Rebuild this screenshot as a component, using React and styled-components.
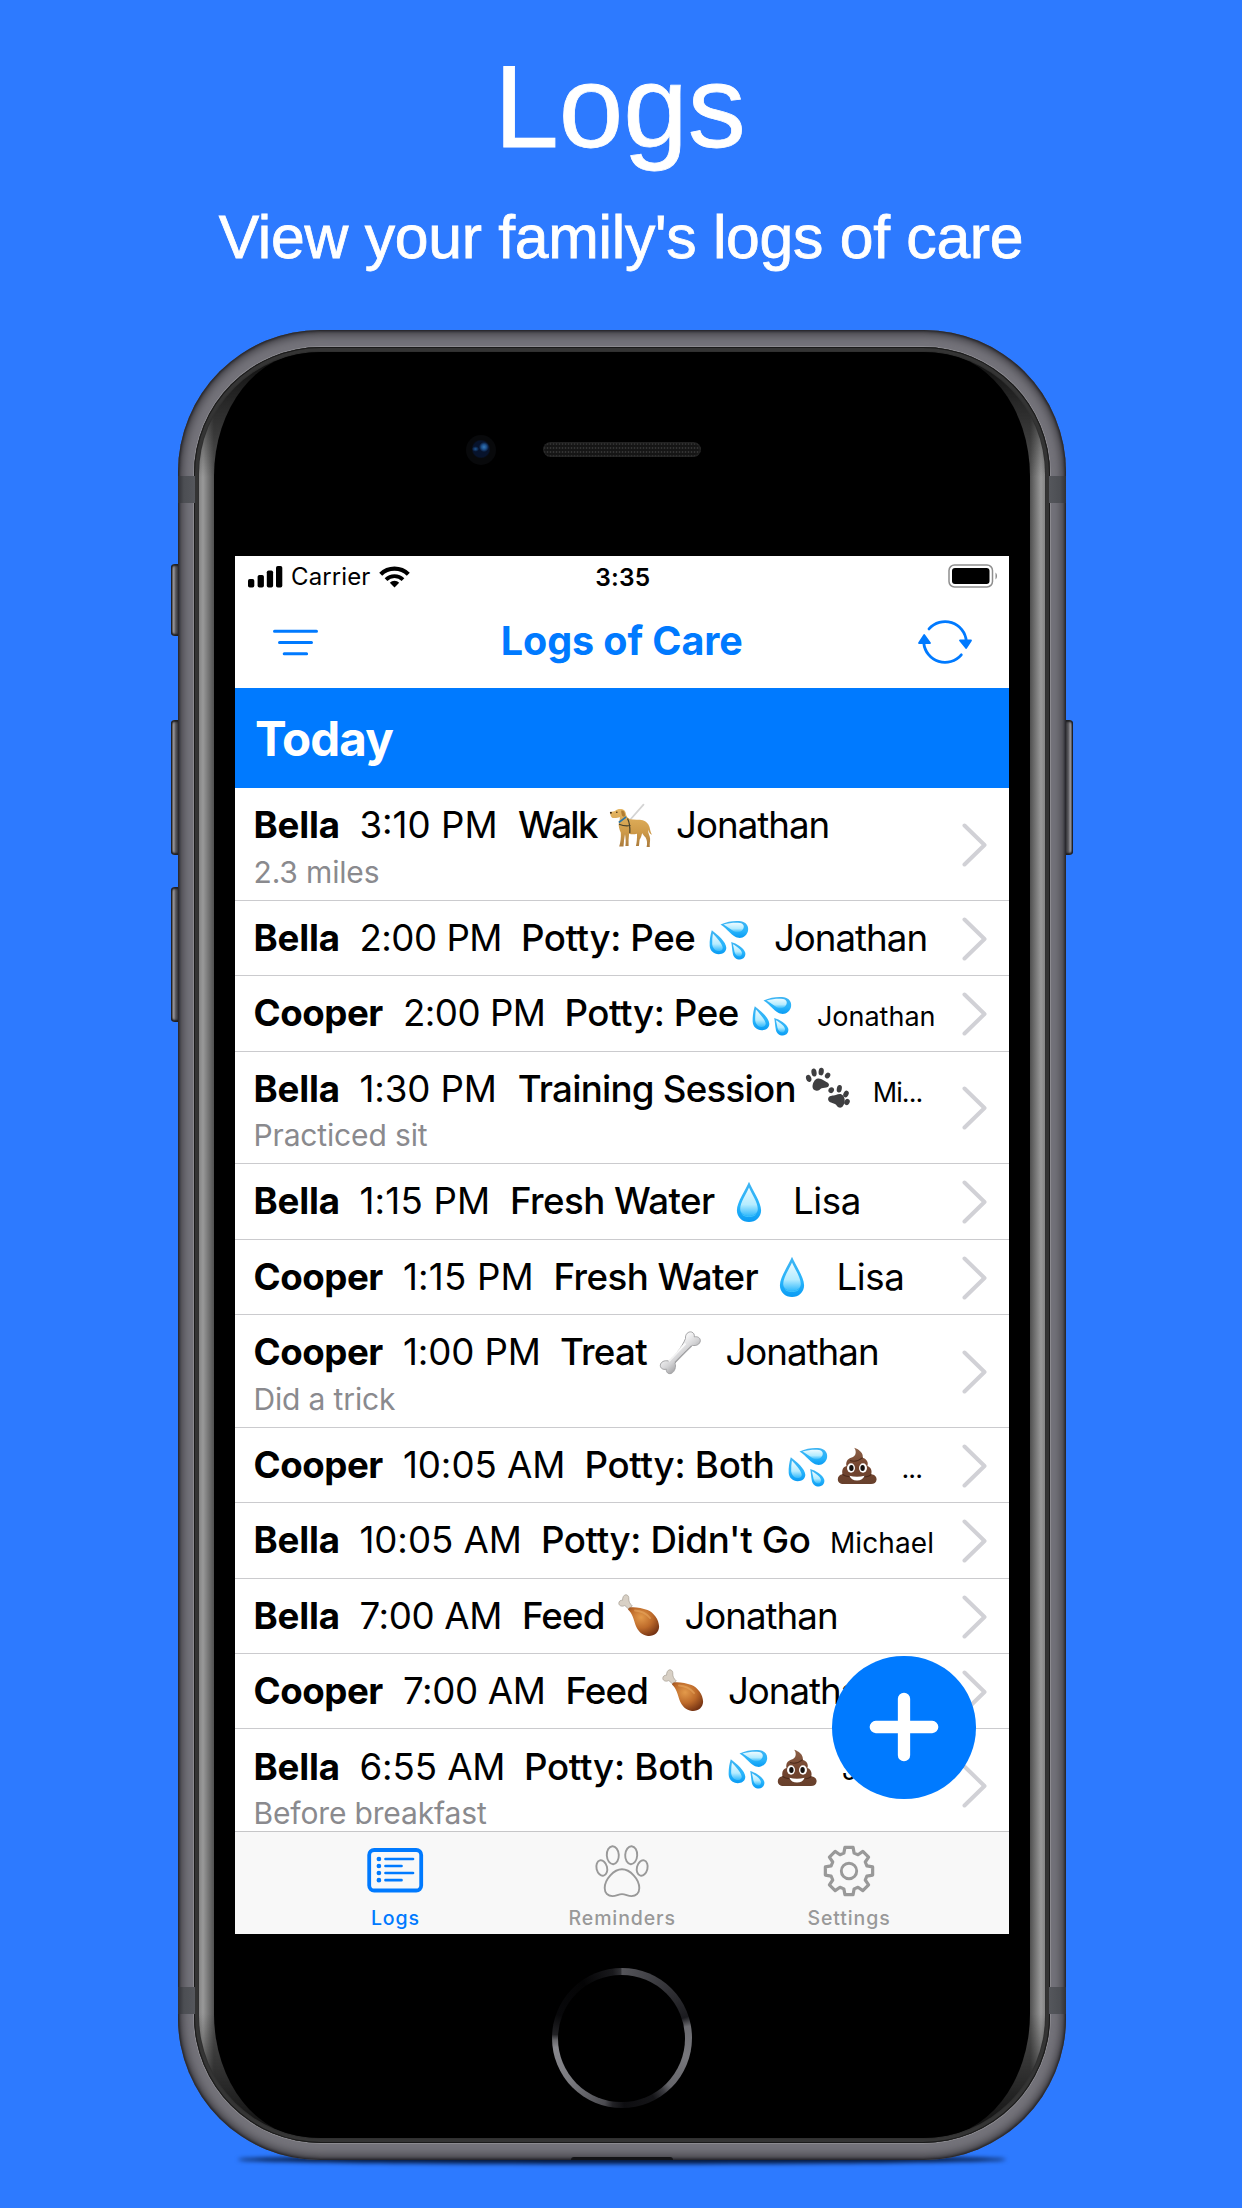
import React from 'react';
import styled, { createGlobalStyle } from 'styled-components';

const BLUE = '#007aff';

const GlobalStyle = createGlobalStyle`
  * { box-sizing: border-box; }
  body { margin: 0; background: #2d7aff; }
`;

/* ---------- page ---------- */

const Page = styled.main`
  width: 1242px;
  height: 2208px;
  overflow: hidden;
  background: #2d7aff;
  display: flex;
  flex-direction: column;
  font-family: Inter, "Liberation Sans", sans-serif;
`;

const Header = styled.header`
  height: 330px;
  flex: none;
  padding-top: 41px;
  color: #fff;
  text-align: center;
  font-family: "Liberation Sans", Arial, sans-serif;
`;

const Title = styled.h1`
  margin: 0;
  padding-right: 2px;
  font-size: 116px;
  line-height: 132px;
  font-weight: 400;
  -webkit-text-stroke: 0.8px #fff;
`;

const Subtitle = styled.p`
  margin: 30px 0 0;
  font-size: 60.7px;
  line-height: 68px;
  letter-spacing: -0.28px;
  -webkit-text-stroke: 0.8px #fff;
`;

/* ---------- phone hardware ---------- */

const Phone = styled.div`
  position: relative;
  isolation: isolate;
  flex: none;
  width: 888.5px;
  height: 1829.5px;
  margin-left: 177.5px;
`;

const SideButton = styled.i`
  position: absolute;
  z-index: -1;
  top: ${(p) => p.$top}px;
  ${(p) => p.$side}: -6.5px;
  width: 12px;
  height: ${(p) => p.$length}px;
  border-radius: 4px;
  background: linear-gradient(${(p) => (p.$side === 'left' ? 'to right' : 'to left')}, #232327 0 8%, #8f8e93 16% 26%, #66656a 34%, #2c2c30 62%);
  box-shadow: inset 0 3px 2px -1px #1d1d20, inset 0 -3px 2px -1px #1d1d20;
`;

const GroundShadow = styled.i`
  position: absolute;
  z-index: -2;
  left: 60px;
  right: 60px;
  bottom: -4px;
  height: 9px;
  border-radius: 50%;
  background: #061a40;
  filter: blur(2px);
`;

const Frame = styled.div`
  position: relative;
  height: 100%;
  padding: 16.5px;
  border-radius: 142px;
  background: #74737a;
  box-shadow: inset 0 0 3px 1px #1c1c20, inset 0 0 10px 4px #3b3a40;
`;

const Antenna = styled.i`
  position: absolute;
  top: ${(p) => p.$top}px;
  ${(p) => p.$side}: 0;
  width: 17px;
  height: 27px;
  background: linear-gradient(${(p) => (p.$side === 'left' ? 'to right' : 'to left')}, #303136, #4c4e53 35%, #55575c);
`;

const PortNotch = styled.i`
  position: absolute;
  left: 50%;
  bottom: 0;
  width: 102px;
  height: 3px;
  margin-left: -51px;
  border-radius: 6px 6px 0 0;
  background: #131316;
`;

const Ring = styled.div`
  height: 100%;
  padding: 5px;
  border-radius: 127px;
  background: #303030;
  box-shadow: 0 0 0 1px #8b8a90, inset 0 0 0 1px #1a1a1a, inset 0 0 0 4px #343434;
`;

const Glass = styled.div`
  position: relative;
  height: 100%;
  padding: 0 15px;
  border-radius: 122px;
  overflow: hidden;
  background:
    linear-gradient(#141414 15px, transparent 125px, transparent calc(100% - 125px), #141414 calc(100% - 15px)),
    linear-gradient(to right, #858585, #999 4px, #505050 15px, #505050 calc(100% - 15px), #999 calc(100% - 4px), #858585);
`;

const Face = styled.div`
  height: 100%;
  border-radius: 98px / 124px;
  background: #000;
  display: flex;
  flex-direction: column;
  align-items: center;
`;

const TopBezel = styled.div`
  width: 100%;
  height: 204px;
  flex: none;
  padding-bottom: 8px;
  display: grid;
  grid-template-columns: 1fr 158px 1fr;
  align-items: center;
  column-gap: 47px;
`;

const Camera = styled.i`
  justify-self: end;
  width: 30px;
  height: 30px;
  border-radius: 50%;
  background:
    radial-gradient(ellipse at 18px 12px, #3378b8 0, #1d4f8c 2.5px, transparent 5px),
    radial-gradient(ellipse at 9.5px 14px, #1f5795 0, transparent 3.5px),
    radial-gradient(circle at 15px 14px, #07132c 8px, #08090b 9.5px);
`;

const Speaker = styled.i`
  height: 15px;
  border-radius: 8px;
  background:
    radial-gradient(circle, #333 0.8px, transparent 1.2px) 0 0 / 3px 4px,
    #151515;
  box-shadow: inset 0 0 2px 1px #262626;
`;

const BottomBezel = styled.div`
  flex: 1;
  display: flex;
  align-items: center;
  padding-top: 5px;
`;

const HomeButton = styled.i`
  width: 140px;
  height: 140px;
  border-radius: 50%;
  padding: 6.5px;
  background: conic-gradient(#55555a 0deg, #45454a 20deg, #29292d 55deg, #1b1b1f 72deg, #6a6a6f 80deg, #77777c 105deg, #66666b 135deg, #3a3a3f 142deg, #151518 152deg, #0d0d10 178deg, #222226 188deg, #4b4b50 195deg, #7b7b80 230deg, #88888d 262deg, #6a6a6e 268deg, #222225 273deg, #08080a 290deg, #040405 325deg, #19191c 352deg, #303034 359deg, #55555a 360deg);
  &::after {
    content: "";
    display: block;
    height: 100%;
    border-radius: 50%;
    background: #000;
  }
`;

/* ---------- app screen ---------- */

const Screen = styled.div`
  position: relative;
  flex: none;
  width: 774.5px;
  height: 1378px;
  background: #fff;
  color: #000;
  display: flex;
  flex-direction: column;
  overflow: hidden;
`;

const StatusBar = styled.div`
  height: 41px;
  flex: none;
  padding: 1px 11px 0 13px;
  display: grid;
  grid-template-columns: 1fr auto 1fr;
  align-items: center;
  font-size: 24px;
  line-height: 30px;
`;

const Network = styled.div`
  display: flex;
  align-items: center;
  gap: 8.5px;
  letter-spacing: 0.1px;
`;

const Clock = styled.time`
  font-size: 24.5px;
  font-weight: 600;
  letter-spacing: 0.2px;
`;

const Battery = styled.svg`
  justify-self: end;
  margin-bottom: 2px;
`;

const NavBar = styled.div`
  height: 91.5px;
  flex: none;
  padding: 0 37px 0 37px;
  display: grid;
  grid-template-columns: 1fr auto 1fr;
  align-items: center;
  color: ${BLUE};
`;

const NavTitle = styled.h2`
  margin: 0;
  padding-bottom: 2px;
  font-size: 39.5px;
  line-height: 48px;
  font-weight: 700;
  letter-spacing: -0.1px;
`;

const NavIcon = styled.svg`
  justify-self: ${(p) => p.$side};
  overflow: visible;
`;

const DayHeader = styled.div`
  height: 100px;
  flex: none;
  padding: 0 20.5px 0;
  background: ${BLUE};
  color: #fff;
  font-size: 47.5px;
  font-weight: 700;
  line-height: 101px;
  letter-spacing: -0.9px;
`;

const List = styled.div`
  flex: 1;
  min-height: 0;
  overflow: hidden;
`;

const Row = styled.div`
  height: ${(p) => (p.$tall ? 112.7 : 75.42)}px;
  padding: 15.2px 22px 0 19px;
  border-bottom: 1px solid #cbcbce;
  display: flex;
  justify-content: space-between;
`;

const Entry = styled.div`
  display: flex;
  flex-direction: column;
`;

const Line = styled.div`
  height: 44px;
  display: flex;
  align-items: baseline;
  font-size: 36.7px;
  line-height: 44px;
  white-space: pre;
`;

const Cell = styled.span`
  flex: none;
  width: ${(p) => p.$w}px;
  font-weight: ${(p) => p.$weight || 400};
  letter-spacing: ${(p) => p.$track || 0}px;
`;

const Person = styled.span`
  margin-left: ${(p) => p.$gap}px;
  font-size: ${(p) => p.$size || 36.7}px;
  letter-spacing: ${(p) => p.$track || 0}px;
`;

const Note = styled.div`
  margin-top: 6.8px;
  font-size: 30px;
  line-height: 36px;
  letter-spacing: -0.15px;
  color: #8a8a8e;
`;

const ChevronIcon = styled.svg`
  align-self: center;
  margin-top: -13px;
  flex: none;
`;

const Glyph = styled.svg`
  flex: none;
  align-self: flex-start;
  width: 42px;
  height: 42px;
  margin: 3.4px 3.5px 0;
  overflow: visible;
`;

const AddButton = styled.button`
  position: absolute;
  left: 597.5px;
  top: 1100px;
  width: 143.5px;
  height: 143.5px;
  padding: 0;
  border: 0;
  border-radius: 50%;
  background: ${BLUE};
  display: grid;
  place-items: center;
`;

const TabBar = styled.nav`
  height: 102.5px;
  flex: none;
  border-top: 1.5px solid #c6c6c8;
  background: #f8f8f8;
  display: flex;
  justify-content: center;
`;

const Tab = styled.div`
  width: 226.8px;
  padding: 9px 0 0 1px;
  display: flex;
  flex-direction: column;
  align-items: center;
  color: ${(p) => (p.$active ? BLUE : '#999')};
  font-size: 19.5px;
  line-height: 24px;
  font-weight: 500;
  letter-spacing: 0.9px;
`;

const TabIcon = styled.svg`
  width: 60px;
  height: 58px;
  margin-bottom: 7px;
`;

/* ---------- drawings ---------- */

const HiddenDefs = styled.svg`
  display: block;
  width: 0;
  height: 0;
  flex: none;
`;

const Defs = () => (
  <HiddenDefs aria-hidden="true">
    <defs>
      <linearGradient id="drop" x1="0" y1="0" x2="0" y2="1">
        <stop offset="0" stopColor="#3fb4f2" />
        <stop offset="0.6" stopColor="#28b4fb" />
        <stop offset="1" stopColor="#0a9bf3" />
      </linearGradient>
      <linearGradient id="dropShine" x1="0" y1="0" x2="0" y2="1">
        <stop offset="0" stopColor="#eefbff" />
        <stop offset="0.6" stopColor="#b5ecff" />
        <stop offset="1" stopColor="#31b9fc" />
      </linearGradient>
      <linearGradient id="coat" x1="0" y1="0" x2="0" y2="1">
        <stop offset="0" stopColor="#e6b763" />
        <stop offset="0.6" stopColor="#cf9b49" />
        <stop offset="1" stopColor="#a97a3c" />
      </linearGradient>
      <linearGradient id="bone" x1="0.2" y1="0.2" x2="0.7" y2="0.8">
        <stop offset="0.3" stopColor="#f3f3f4" />
        <stop offset="0.6" stopColor="#d3d3d5" />
        <stop offset="1" stopColor="#8e8e90" />
      </linearGradient>
      <radialGradient id="meat" cx="0.42" cy="0.35" r="0.75">
        <stop offset="0" stopColor="#e39a4b" />
        <stop offset="0.5" stopColor="#bd6a2a" />
        <stop offset="1" stopColor="#6c2c10" />
      </radialGradient>
      <linearGradient id="swirl" x1="0" y1="0" x2="0" y2="1">
        <stop offset="0" stopColor="#8c6148" />
        <stop offset="0.5" stopColor="#754630" />
        <stop offset="1" stopColor="#67402c" />
      </linearGradient>
    </defs>
  </HiddenDefs>
);

const Splash = () => (
  <Glyph viewBox="0 0 42 42">
    <g fill="url(#drop)">
      <path d="M12.5 5.5C20 2 28 1.5 33 2.3c5 .9 7.700 4.500 7.100 8.900-.7 5-5.200 8.300-9.800 7.600C24.500 18 19.500 10 12.500 5.500Z" />
      <path d="M3.800 11.300c5.500 4.200 14.400 11.500 14.500 17.500.1 3.800-3.200 6.400-7.600 6.400-5 0-8.600-3.500-9-8.200-.3-5 .6-11.200 2.100-15.700Z" />
      <path d="M23.200 23c5.200 1.500 12.500 5.700 14 10.500.900 3.600-1.500 6.900-5.400 7-3.600 0-6.200-2.400-6.900-5.600-.900-4-.9-8.700-1.700-11.900Z" />
    </g>
    <g fill="url(#dropShine)">
      <path d="M15.500 5.600c6-1.900 12-2.200 16.500-1.700 3.500.5 4.700 3.300 3.100 6.100-1.900 3-5.400 4.300-9 2.500C22.500 10.700 19.500 7.700 15.500 5.600Z" />
      <path d="M4.900 14.500c3.300 3.600 8.600 9.300 9.700 13.500.6 2.800-1.700 4.400-4.500 4-3.600-.6-5.700-3.500-5.900-7-.1-3.500.1-7 .7-10.500Z" />
      <path d="M24.900 25.300c3.800 2 8 5 9 8.200.5 2.400-.9 3.900-2.700 3.900-2.600-.2-4.100-2-4.700-4.600-.6-2.600-.9-5-1.600-7.500Z" />
    </g>
  </Glyph>
);

const Droplet = () => (
  <Glyph viewBox="0 0 42 42">
    <path d="M21-1.200c3 7.700 12.100 20.200 12.100 28.500 0 7-5.500 11.800-12.100 11.800S8.900 34.300 8.900 27.300C8.900 19 18 6.500 21-1.200Z" fill="url(#drop)" />
    <path d="M21 4.500c2.700 6.500 8.800 15 8.800 21.500 0 4.300-4 7-8.800 7s-8.800-2.700-8.800-7C12.200 19.500 18.300 11 21 4.500Z" fill="url(#dropShine)" />
    <path d="M13.500 30c2 4.200 13 4.200 15 0-.5 5.400-14.500 5.400-15 0Z" fill="#56d4ff" opacity=".7" />
  </Glyph>
);

const GuideDog = () => (
  <Glyph viewBox="0 0 42 42">
    <path d="M33.500-2.300 19.500 13.500" stroke="#d4d4d4" strokeWidth="1.800" fill="none" strokeLinecap="round" />
    <path
      d="M.3 5.300C2 4.300 4 4.700 5.200 3.800 7 2 10 1.500 12.500 2.300c2.200.7 3.200 2.600 3.500 5 .4 2.300 1.800 4 4.300 5 4.200.8 8.700 0 12.500 1 3.400.9 5.500 3.300 6.700 6.700.8 2.900 1.100 5.700 2.500 7.700-2.200-.7-3.200-2.600-3.900-5.200-.4 3.400 1.800 6 2 9 .1 3-.6 5.600-.3 8.500h-3.200c.9-3.700.6-6.700-1-9.500-1.700-1.700-3-3.200-3.500-4.500-.5 2.700-1.300 4.900-2.400 6.500-.5 2.500-.4 4.700-.8 6.500h-3c.9-3.300 1.200-7.500 1.100-12.300-2.800.7-5.400.7-7.900 0-.5 4.100-.7 8.100-.5 12.300h-3.200c.6-4 .2-8-.4-11.700-.7 4-1.300 8-1.500 12.200H9.200c1.400-4.500 1.900-9.200 1.600-13.800-1.500-3.200-2.400-6.500-2-9.400.5-2.400 1.200-4.400 1-6.300-1.800.8-4.700 1.400-7.300.9C.8 10.400 0 7.300.3 5.300Z"
      fill="url(#coat)"
    />
    <path d="M11.300 3.500c2.400-.4 4 1.600 3.700 5.500-.8 1.300-2.600.8-3.200-1-.3-1.600-.8-3.200-.5-4.500Z" fill="#b17d31" />
    <circle cx="6.800" cy="5.200" r=".8" fill="#3d2810" />
    <circle cx=".9" cy="5.800" r="1" fill="#3d2810" />
    <path d="m8.800 15.500 7.400-5.700" stroke="#2b76a9" strokeWidth="1.600" />
    <path d="M9 17.300c4 1.500 7.500 2 11.500 1.200M17.500 11.500c1.800 3.500 2.700 7.500 2.300 14.500" stroke="#46402c" strokeWidth="1.200" fill="none" />
  </Glyph>
);

const Paws = () => (
  <Glyph viewBox="0 0 42 42">
    <g fill="#3f3f41">
      <path d="M5.500 16.500c.2-3.500 2-7.500 5.500-8 4-.4 6 2.500 8.500 3.400 2.700 1 3.300 3.500 1.300 5-2 1-4.300.5-6.200 1.300-1.800 1-2.700 2.800-5 2.600-2.400-.3-4.300-2-4.100-4.300Z" />
      <ellipse cx="1.700" cy="8.400" rx="2.600" ry="3.700" transform="rotate(-18 1.700 8.400)" />
      <ellipse cx="7" cy="2.500" rx="2.600" ry="4" transform="rotate(-8 7 2.500)" />
      <ellipse cx="14.200" cy="1.600" rx="2.600" ry="3.800" transform="rotate(8 14.200 1.600)" />
      <ellipse cx="20.600" cy="5.500" rx="2.500" ry="3.100" transform="rotate(35 20.600 5.500)" />
      <path d="M21.500 27.500c1.500-2.200 4.800-1.700 7.300-2.500 3-1 5.500-1.600 7.400.8 2 2.800 2.100 7-.2 10.300-1.500 2.200-4.500 2-6-.1-1.100-1.900-2.700-2.700-4.800-3.100-2.800-.6-5-2.700-3.700-5.400Z" />
      <ellipse cx="24.200" cy="20.200" rx="2.700" ry="3" transform="rotate(30 24.200 20.200)" />
      <ellipse cx="32.300" cy="18.800" rx="2.500" ry="3.800" transform="rotate(12 32.300 18.800)" />
      <ellipse cx="39" cy="24" rx="2.500" ry="3.500" transform="rotate(28 39 24)" />
      <ellipse cx="40" cy="32" rx="2.600" ry="3.200" transform="rotate(30 40 32)" />
    </g>
  </Glyph>
);

const Bone = () => (
  <Glyph viewBox="0 0 42 42">
    <path
      d="M26.500 4.500c-.5-4.500 3-7.300 6-6.500 2.200.7 3.200 2.600 2.800 4.900 3.300-.8 6.200 1 6 4-.4 3.300-4 5.300-7.800 4.500-2.500 1.300-15 14-17.500 17.700 1.300 3.600-.2 8.800-3.700 10.300-3 1-5.300-1-5-4.200-3.300.8-6.200-1-6-4 .4-3.300 4-5.100 8-4.300 3.300-2 14-13.500 17.200-22.400Z"
      fill="url(#bone)"
      stroke="#9c9c9e"
      strokeWidth=".9"
    />
    <path d="M26.500 9.500 9.800 27" stroke="#fff" strokeWidth="2" opacity=".8" />
    <path d="M32.500 12 16 28.500" stroke="#98989b" strokeWidth="1.500" opacity=".7" />
  </Glyph>
);

const Drumstick = () => (
  <Glyph viewBox="0 0 42 42">
    <path d="M10.500 12 6.800 8.500C4 10 .8 8.800.8 6.300c0-2 1.700-3.300 3.800-3.100-.2-2.700 1.200-5.500 3.400-5.500 2 .2 3 2 2.800 4.300-.1 2.700 1 4.500 3.500 7Z" fill="#d8d0c5" stroke="#a59c90" strokeWidth=".7" />
    <path d="M12 10.500c4.500-.8 12 .6 17.500 2.500 6 2.300 11.500 9.500 11.600 16.500C41 35.500 36 39.500 30 39c-6-.6-10.500-5.200-12.500-11-1.800-5.300-2.700-11-7.500-15.500.3-1 .9-1.700 2-2Z" fill="url(#meat)" />
    <path d="M17 13.500c5 .3 11 2.500 15 7.500" stroke="#eeb067" strokeWidth="2" fill="none" opacity=".5" strokeLinecap="round" />
  </Glyph>
);

const Poop = () => (
  <Glyph viewBox="0 0 42 42">
    <path d="M18.200 1.700c5 1.500 9.500 5.500 8.500 10 4 1.300 6 4.500 4.700 8.300 3.200 1 5 4.500 3.800 8.300 3.500.3 5.500 2.500 5.400 5.200-.2 3-2.500 4.500-5.600 4.500H7.500c-3.600 0-5.700-1.900-5.700-4.800 0-2.600 1.700-4.700 4.700-5-1-4 .7-7.500 4-8.200-1-4 1-7 4.500-8.200 3-1.200 4.700-3 4.700-5.400 0-1.700-.3-3.200-1.500-4.700Z" fill="url(#swirl)" />
    <path d="M14 14.500c4 1.500 9 .3 12.700-2.800M6.500 28.200c2 2 6 2.800 10 2.500M35.200 28.300c-1.800 2-4.500 2.600-8 2.500" stroke="#4d2b1b" strokeWidth="1.100" fill="none" />
    <ellipse cx="15" cy="22" rx="4" ry="4.700" fill="#fff" />
    <ellipse cx="27" cy="22" rx="4" ry="4.700" fill="#fff" />
    <ellipse cx="15.400" cy="22" rx="2.200" ry="2.900" fill="#16110f" />
    <ellipse cx="26.600" cy="22" rx="2.200" ry="2.900" fill="#16110f" />
    <path d="M13.500 29.800c4.500 1.200 10.500 1.200 15 0-1 3.200-3.800 4.700-7.500 4.700s-6.500-1.500-7.500-4.700Z" fill="#fff" />
  </Glyph>
);

const Chevron = () => (
  <ChevronIcon width="25" height="44" viewBox="0 0 25 44" fill="none" stroke="#d1d1d6" strokeWidth="4" strokeLinecap="round" strokeLinejoin="round">
    <path d="M2.500 2.500 22.500 22 2.500 41.500" />
  </ChevronIcon>
);

/* ---------- data ---------- */

const NAMES = {
  Bella: { w: 105.9, track: -0.2 },
  Cooper: { w: 149.4, track: -0.45 },
};

const TIMES = {
  '3:10 PM': { w: 158.7, track: 0 },
  '2:00 PM': { w: 161.5, track: -0.5 },
  '1:30 PM': { w: 158.3, track: -0.1 },
  '1:15 PM': { w: 150.5, track: 0.2 },
  '1:00 PM': { w: 157, track: -0.1 },
  '10:05 AM': { w: 181.5, track: -0.05 },
  '7:00 AM': { w: 162.5, track: -0.35 },
  '6:55 AM': { w: 164.5, track: -0.1 },
};

const ACTIONS = {
  walk: { label: 'Walk', w: 88.5, track: -1.7, icons: [GuideDog] },
  pee: { label: 'Potty: Pee', w: 183.5, track: -0.4, icons: [Splash] },
  training: { label: 'Training Session', w: 286, track: -0.75, icons: [Paws] },
  water: { label: 'Fresh Water', w: 214.5, track: -0.55, icons: [Droplet] },
  treat: { label: 'Treat', w: 96, track: -0.7, icons: [Bone] },
  both: { label: 'Potty: Both', w: 199.5, track: -0.25, icons: [Splash, Poop] },
  none: { label: "Potty: Didn't Go", w: 271.5, track: -0.38, icons: [] },
  feed: { label: 'Feed', w: 93, track: -0.85, icons: [Drumstick] },
};

const JONATHAN = { text: 'Jonathan', track: -1, gap: 20.5 };
const LISA = { text: 'Lisa', track: -0.4, gap: 19.5 };

const LOGS = [
  { name: 'Bella', time: '3:10 PM', action: 'walk', person: JONATHAN, note: '2.3 miles' },
  { name: 'Bella', time: '2:00 PM', action: 'pee', person: JONATHAN },
  { name: 'Cooper', time: '2:00 PM', action: 'pee', person: { text: 'Jonathan', size: 27, gap: 20 } },
  { name: 'Bella', time: '1:30 PM', action: 'training', person: { text: 'Mi...', size: 27, track: -0.9, gap: 20 }, note: 'Practiced sit' },
  { name: 'Bella', time: '1:15 PM', action: 'water', person: LISA },
  { name: 'Cooper', time: '1:15 PM', action: 'water', person: LISA },
  { name: 'Cooper', time: '1:00 PM', action: 'treat', person: JONATHAN, note: 'Did a trick' },
  { name: 'Cooper', time: '10:05 AM', action: 'both', person: { text: '...', size: 27, track: -0.9, gap: 19.5 } },
  { name: 'Bella', time: '10:05 AM', action: 'none', person: { text: 'Michael', size: 28, track: 0.1, gap: 17.5 } },
  { name: 'Bella', time: '7:00 AM', action: 'feed', person: JONATHAN },
  { name: 'Cooper', time: '7:00 AM', action: 'feed', person: JONATHAN },
  { name: 'Bella', time: '6:55 AM', action: 'both', person: { text: 'J...', size: 27, track: -0.9, gap: 20.5 }, note: 'Before breakfast' },
];

const LogRow = ({ log }) => {
  const name = NAMES[log.name];
  const time = TIMES[log.time];
  const action = ACTIONS[log.action];
  const { person } = log;
  return (
    <Row $tall={Boolean(log.note)}>
      <Entry>
        <Line>
          <Cell $w={name.w} $track={name.track} $weight={700}>{log.name}</Cell>
          <Cell $w={time.w} $track={time.track}>{log.time}</Cell>
          <Cell $w={action.w} $track={action.track} $weight={500}>{action.label}</Cell>
          {action.icons.map((Icon, i) => <Icon key={i} />)}
          <Person $gap={person.gap} $size={person.size} $track={person.track}>{person.text}</Person>
        </Line>
        {log.note && <Note>{log.note}</Note>}
      </Entry>
      <Chevron />
    </Row>
  );
};

const gearPath = (() => {
  const pts = [];
  const c = 30;
  for (let i = 0; i < 8; i += 1) {
    const a = (i * Math.PI) / 4;
    [[-0.28, 18.6], [-0.17, 24], [0.17, 24], [0.28, 18.6]].forEach(([d, r]) => {
      pts.push(`${(c + r * Math.sin(a + d)).toFixed(2)} ${(c - r * Math.cos(a + d)).toFixed(2)}`);
    });
  }
  return `M${pts.join('L')}Z`;
})();

export default function App() {
  return (
    <Page>
      <GlobalStyle />
      <Defs />
      <Header>
        <Title>Logs</Title>
        <Subtitle>View your family's logs of care</Subtitle>
      </Header>
      <Phone>
        <GroundShadow />
        <SideButton $side="left" $top={234} $length={72} />
        <SideButton $side="left" $top={390} $length={135} />
        <SideButton $side="left" $top={557} $length={135} />
        <SideButton $side="right" $top={390} $length={135} />
        <Frame>
          <Antenna $side="left" $top={146} />
          <Antenna $side="right" $top={146} />
          <Antenna $side="left" $top={1656.5} />
          <Antenna $side="right" $top={1656.5} />
          <PortNotch />
          <Ring>
            <Glass>
              <Face>
                <TopBezel>
                  <Camera />
                  <Speaker />
                </TopBezel>
                <Screen>
                  <StatusBar>
                    <Network>
                      <svg width="35" height="22" viewBox="0 0 35 22">
                        <rect x="0" y="13" width="6.300" height="8.500" rx="1.800" />
                        <rect x="9.600" y="9" width="6.300" height="12.500" rx="1.800" />
                        <rect x="18.800" y="4.500" width="6.300" height="17" rx="1.800" />
                        <rect x="28" y="0" width="6.300" height="21.500" rx="1.800" />
                      </svg>
                      Carrier
                      <svg width="31" height="23" viewBox="0 0 31 23" fill="none" stroke="#000" strokeWidth="4.200">
                        <path d="M1.700 9.300a19.500 19.500 0 0 1 27.600 0" />
                        <path d="M7 14.700a12 12 0 0 1 17 0" strokeWidth="3.800" />
                        <path d="M15.500 22.500 10.800 17.700a6.600 6.600 0 0 1 9.400 0Z" fill="#000" stroke="none" />
                      </svg>
                    </Network>
                    <Clock>3:35</Clock>
                    <Battery width="50" height="24" viewBox="0 0 50 24">
                      <rect x="1" y="1" width="43.500" height="22" rx="5.500" fill="none" stroke="#8e8e8e" strokeWidth="1.500" />
                      <rect x="4" y="4" width="37.500" height="16" rx="3" fill="#000" />
                      <path d="M47.500 8.500c2 1.500 2 5.500 0 7Z" fill="#8e8e8e" />
                    </Battery>
                  </StatusBar>
                  <NavBar>
                    <NavIcon $side="start" width="47" height="26" viewBox="0 0 47 26" fill="none" stroke={BLUE} strokeWidth="3" strokeLinecap="round">
                      <path d="M2.500 2.200h42M7.500 13.500h32M12.200 24.800h22.400" />
                    </NavIcon>
                    <NavTitle>Logs of Care</NavTitle>
                    <NavIcon $side="end" width="54" height="46" viewBox="0 0 54 46">
                      <path d="M11 9.900A21.300 21.300 0 0 1 48.300 22" fill="none" stroke={BLUE} strokeWidth="2.800" strokeLinecap="round" />
                      <path d="M43.300 35.800A21.300 21.300 0 0 1 5.800 24" fill="none" stroke={BLUE} strokeWidth="2.800" strokeLinecap="round" />
                      <path d="M42 21.500h11l-4.900 7.500Z" fill={BLUE} stroke={BLUE} strokeWidth="1.800" strokeLinejoin="round" />
                      <path d="M1 24h11L6.200 16Z" fill={BLUE} stroke={BLUE} strokeWidth="1.800" strokeLinejoin="round" />
                    </NavIcon>
                  </NavBar>
                  <DayHeader>Today</DayHeader>
                  <List>
                    {LOGS.map((log, i) => <LogRow key={i} log={log} />)}
                  </List>
                  <TabBar>
                    <Tab $active>
                      <TabIcon viewBox="0 0 60 58" fill="none" stroke={BLUE} strokeLinecap="round">
                        <rect x="4.200" y="9" width="52" height="40.500" rx="5" strokeWidth="3.800" />
                        <path d="M20.500 18H48M20.500 25h16M20.500 32H48M20.500 39.200h16" strokeWidth="2.700" />
                        <path d="M13.900 18h.01M13.900 25h.01M13.900 32h.01M13.900 39.200h.01" strokeWidth="4.700" />
                      </TabIcon>
                      Logs
                    </Tab>
                    <Tab>
                      <TabIcon viewBox="0 0 60 58" fill="none" stroke="#999" strokeWidth="1.900">
                        <ellipse cx="9.800" cy="27" rx="5.300" ry="7.800" transform="rotate(-14 9.800 27)" />
                        <ellipse cx="50.200" cy="27" rx="5.300" ry="7.800" transform="rotate(14 50.200 27)" />
                        <ellipse cx="20.800" cy="14.200" rx="6" ry="9" transform="rotate(-3 20.800 14.200)" />
                        <ellipse cx="39.200" cy="14.200" rx="6" ry="9" transform="rotate(3 39.200 14.200)" />
                        <path d="M30 28.300c-8 0-17.300 9.700-17.300 18.800 0 5.200 3.400 8 7.800 8 4 0 5.700-2 9.500-2s5.500 2 9.500 2c4.400 0 7.800-2.800 7.800-8 0-9.100-9.300-18.800-17.300-18.800Z" />
                      </TabIcon>
                      Reminders
                    </Tab>
                    <Tab>
                      <TabIcon viewBox="0 0 60 58" fill="none" stroke="#999" strokeLinejoin="round">
                        <path d={gearPath} strokeWidth="3.200" />
                        <circle cx="30" cy="30" r="7.700" strokeWidth="2.900" />
                      </TabIcon>
                      Settings
                    </Tab>
                  </TabBar>
                  <AddButton aria-label="Add log">
                    <svg width="70" height="70" viewBox="0 0 70 70" stroke="#fff" strokeWidth="12.300" strokeLinecap="round">
                      <path d="M35 6.800v56.400M6.800 35h56.400" />
                    </svg>
                  </AddButton>
                </Screen>
                <BottomBezel>
                  <HomeButton />
                </BottomBezel>
              </Face>
            </Glass>
          </Ring>
        </Frame>
      </Phone>
    </Page>
  );
}
